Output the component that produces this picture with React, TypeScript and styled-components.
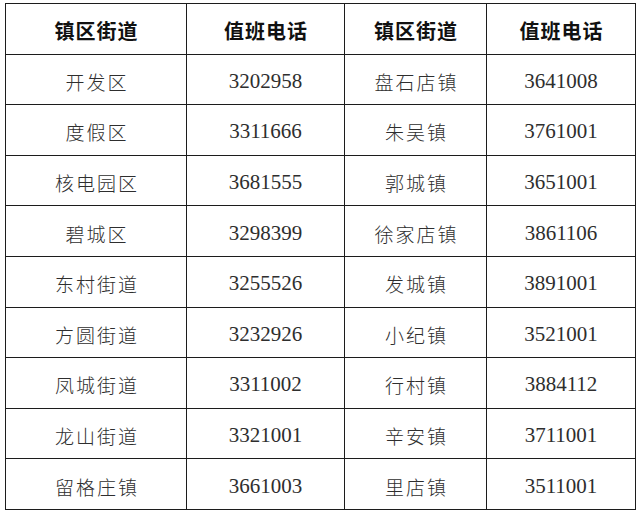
import styled, { createGlobalStyle } from "styled-components";

type DutyRow = {
  leftArea: string;
  leftPhone: string;
  rightArea: string;
  rightPhone: string;
};

const GlobalStyle = createGlobalStyle`
  html, body {
    margin: 0;
    padding: 0;
    background: #ffffff;
  }
`;

const Page = styled.div`
  padding: 3px 0 0 5px;
  width: 640px;
  height: 516px;
  box-sizing: border-box;
`;

const Table = styled.table`
  border-collapse: collapse;
  table-layout: fixed;
  width: 630px;
`;

const Row = styled.tr`
  height: 50.6px;
`;

const HeadCell = styled.th`
  border: 1px solid #1c1c1c;
  padding: 3px 0 0 0;
  text-align: center;
  vertical-align: middle;
  font-family: "Noto Sans CJK SC", "Noto Sans", sans-serif;
  font-size: 20px;
  font-weight: 700;
  color: #111111;
  letter-spacing: 1px;
  text-indent: 1px;
`;

const Cell = styled.td<{ $kind: "area" | "phone" }>`
  border: 1px solid #1c1c1c;
  padding: ${(p) => (p.$kind === "phone" ? "4px 0 0 0" : "4px 0 0 0")};
  text-align: center;
  vertical-align: middle;
  color: #2e2e2e;
  font-family: ${(p) =>
    p.$kind === "phone"
      ? `"Liberation Serif", "Noto Sans CJK SC", serif`
      : `"Noto Sans CJK SC", "Noto Sans", sans-serif`};
  font-size: ${(p) => (p.$kind === "phone" ? "21px" : "19px")};
  font-weight: ${(p) => (p.$kind === "phone" ? 400 : 300)};
  letter-spacing: ${(p) => (p.$kind === "phone" ? "0" : "2px")};
  text-indent: ${(p) => (p.$kind === "phone" ? "0" : "2px")};
`;

const rows: DutyRow[] = [
  { leftArea: "开发区", leftPhone: "3202958", rightArea: "盘石店镇", rightPhone: "3641008" },
  { leftArea: "度假区", leftPhone: "3311666", rightArea: "朱吴镇", rightPhone: "3761001" },
  { leftArea: "核电园区", leftPhone: "3681555", rightArea: "郭城镇", rightPhone: "3651001" },
  { leftArea: "碧城区", leftPhone: "3298399", rightArea: "徐家店镇", rightPhone: "3861106" },
  { leftArea: "东村街道", leftPhone: "3255526", rightArea: "发城镇", rightPhone: "3891001" },
  { leftArea: "方圆街道", leftPhone: "3232926", rightArea: "小纪镇", rightPhone: "3521001" },
  { leftArea: "凤城街道", leftPhone: "3311002", rightArea: "行村镇", rightPhone: "3884112" },
  { leftArea: "龙山街道", leftPhone: "3321001", rightArea: "辛安镇", rightPhone: "3711001" },
  { leftArea: "留格庄镇", leftPhone: "3661003", rightArea: "里店镇", rightPhone: "3511001" },
];

const App = () => {
  return (
    <Page>
      <GlobalStyle />
      <Table>
        <colgroup>
          <col style={{ width: 181 }} />
          <col style={{ width: 158 }} />
          <col style={{ width: 142 }} />
          <col style={{ width: 149 }} />
        </colgroup>
        <thead>
          <Row>
            <HeadCell>镇区街道</HeadCell>
            <HeadCell>值班电话</HeadCell>
            <HeadCell>镇区街道</HeadCell>
            <HeadCell>值班电话</HeadCell>
          </Row>
        </thead>
        <tbody>
          {rows.map((r) => (
            <Row key={r.leftArea}>
              <Cell $kind="area">{r.leftArea}</Cell>
              <Cell $kind="phone">{r.leftPhone}</Cell>
              <Cell $kind="area">{r.rightArea}</Cell>
              <Cell $kind="phone">{r.rightPhone}</Cell>
            </Row>
          ))}
        </tbody>
      </Table>
    </Page>
  );
};

export default App;
